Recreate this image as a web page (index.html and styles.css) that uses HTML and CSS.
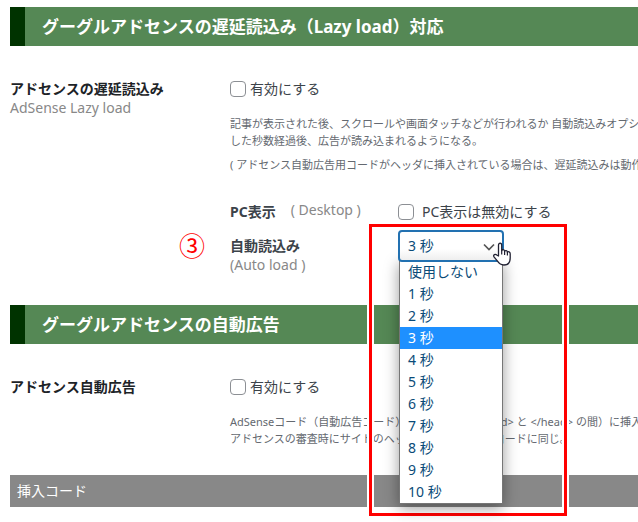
FILE: index.html
```html
<!DOCTYPE html>
<html lang="ja">
<head>
  <meta charset="UTF-8">
  <meta name="viewport" content="width=device-width, initial-scale=1.0">
  <title>アドセンス</title>
  <link rel="stylesheet" href="styles.css">
</head>
<body>
  <main class="settings">
    <h2 class="section-title">グーグルアドセンスの遅延読込み（Lazy load）対応</h2>

    <section class="setting-row">
      <div class="setting-name">
        <h3>アドセンスの遅延読込み</h3>
        <span class="note">AdSense Lazy load</span>
      </div>
      <div class="setting-body">
        <label class="check"><input type="checkbox"> 有効にする</label>
        <p class="description">記事が表示された後、スクロールや画面タッチなどが行われるか 自動読込みオプシ<br>した秒数経過後、広告が読み込まれるようになる。</p>
        <p class="description">( アドセンス自動広告用コードがヘッダに挿入されている場合は、遅延読込みは動作</p>

        <div class="options">
          <div class="option">
            <div class="option-name inline">
              <strong>PC表示</strong>
              <span class="note">( Desktop )</span>
            </div>
            <label class="check wide"><input type="checkbox"> PC表示は無効にする</label>
          </div>

          <div class="option auto-load">
            <span class="step">③</span>
            <div class="option-name">
              <label for="autoLoad">自動読込み</label>
              <span class="note">(Auto load )</span>
            </div>
            <div class="dropdown">
              <div class="frame"></div>
              <ul class="dropdown-list">
                <li>使用しない</li>
                <li>1 秒</li>
                <li>2 秒</li>
                <li class="selected">3 秒</li>
                <li>4 秒</li>
                <li>5 秒</li>
                <li>6 秒</li>
                <li>7 秒</li>
                <li>8 秒</li>
                <li>9 秒</li>
                <li>10 秒</li>
              </ul>
              <select id="autoLoad">
                <option>3 秒</option>
              </select>
              <svg class="arrow" viewBox="0 0 12 8" aria-hidden="true">
                <path d="M1 1.5 6 6.5 11 1.5" fill="none" stroke="#555" stroke-width="1.7"/>
              </svg>
              <svg class="pointer" viewBox="0 0 18 24" aria-hidden="true">
                <path d="M5.5 14V3.2C5.5 .3 8.7 .3 8.7 3.2V8.5C9 7.2 11.5 7.3 11.6 9.3 12.2 8.1 14.4 8.5 14.4 10.2 15.2 9.2 17.2 9.8 17.2 11.8V16C17.2 20.5 15 23 10.8 23 7.5 23 6 21.5 4.5 19.2L1 14.8C-.1 12.9 2.2 11.5 3.7 13Z" fill="#fff" stroke="#223" stroke-width="1.3" stroke-linejoin="round"/>
                <path d="M8.7 8V12.5M11.6 9V13M14.4 10V13.5" fill="none" stroke="#223" stroke-width="1.2"/>
              </svg>
            </div>
          </div>
        </div>
      </div>
    </section>

    <h2 class="section-title">グーグルアドセンスの自動広告</h2>

    <section class="setting-row compact">
      <div class="setting-name">
        <h3>アドセンス自動広告</h3>
      </div>
      <div class="setting-body">
        <label class="check"><input type="checkbox"> 有効にする</label>
        <p class="description">AdSenseコード（自動広告コード）をヘッダー（ &lt;head&gt; と &lt;/head&gt; の間）に挿入<br>アドセンスの審査時にサイトのヘッダに挿入する審査コードに同じ。</p>
      </div>
    </section>

    <h4 class="code-title">挿入コード</h4>
  </main>
</body>
</html>
```
FILE: styles.css
```css
* {
  box-sizing: border-box;
}

body {
  margin: 0;
  background: #fff;
  color: #3c434a;
  font-family: "Noto Sans", "Noto Sans CJK JP", sans-serif;
  font-size: 14px;
  line-height: 22px;
  overflow-x: hidden;
}

h2, h3, h4, p, ul {
  margin: 0;
  padding: 0;
}

.settings {
  padding: 7px 0 15px 10px;
  white-space: nowrap;
}

.section-title {
  border-left: 15px solid #030;
  background: #558855;
  color: #fff;
  padding: 0 17px;
  font-size: 17px;
  line-height: 39px;
}

.setting-row {
  display: grid;
  grid-template-columns: 220px 1fr;
  padding: 32px 0;
}

.setting-row.compact {
  padding-bottom: 21px;
}

.setting-name h3 {
  color: #1d2327;
  font-size: 14px;
}

.note {
  display: block;
  color: #888;
  line-height: 16px;
}

.check {
  display: flex;
  align-items: center;
  gap: 4px;
}

.check.wide {
  gap: 8px;
}

.check input {
  appearance: none;
  width: 16px;
  height: 16px;
  margin: 0;
  border: 1px solid #8c8f94;
  border-radius: 4px;
  background: #fff;
}

.description {
  color: #646970;
  font-size: 11px;
  line-height: 17px;
}

.check + .description {
  margin: 15px 0 7px;
}

.options {
  display: flex;
  flex-direction: column;
  gap: 7px;
  padding-top: 28px;
}

.option {
  position: relative;
  display: grid;
  grid-template-columns: 168px 1fr;
}

.option-name.inline {
  display: flex;
  gap: 15px;
}

.option-name label {
  display: block;
  font-weight: bold;
}

.option-name.inline .note {
  line-height: 18px;
}

.auto-load .option-name {
  padding-top: 5px;
}

.step {
  position: absolute;
  top: 0;
  left: -51px;
  color: #f00;
  font-size: 26px;
  line-height: 32px;
}

.dropdown {
  position: relative;
  width: 106px;
}

.dropdown select {
  position: relative;
  display: block;
  appearance: none;
  width: 100%;
  height: 32px;
  padding: 0 8px;
  border: 2px solid #2271b1;
  border-radius: 4px;
  background: linear-gradient(#fff 60%, #eee);
  color: #0a4b78;
  font: inherit;
}

.dropdown-list {
  position: absolute;
  top: 30px;
  left: 1px;
  right: 1px;
  border: 1px solid #767676;
  background: #fff;
  color: #0a4b78;
  list-style: none;
  box-shadow: 0 4px 14px rgba(0, 0, 0, 0.4);
}

.dropdown-list li {
  padding-left: 8px;
}

.dropdown-list .selected {
  background: #1e90ff;
  color: #fff;
}

.frame {
  position: absolute;
  top: -6px;
  left: -29px;
  width: 198px;
  height: 292px;
  border: 3px solid #f00;
  box-shadow: 0 0 0 2px #fff, inset 0 0 0 2px #fff;
}

.arrow {
  position: absolute;
  top: 13px;
  right: 9px;
  width: 12px;
  height: 8px;
}

.pointer {
  position: absolute;
  top: 12px;
  left: 95px;
  width: 18px;
  height: 24px;
}

.code-title {
  background: #888;
  color: #fff;
  padding-left: 7px;
  font-weight: normal;
  line-height: 32px;
}
```
